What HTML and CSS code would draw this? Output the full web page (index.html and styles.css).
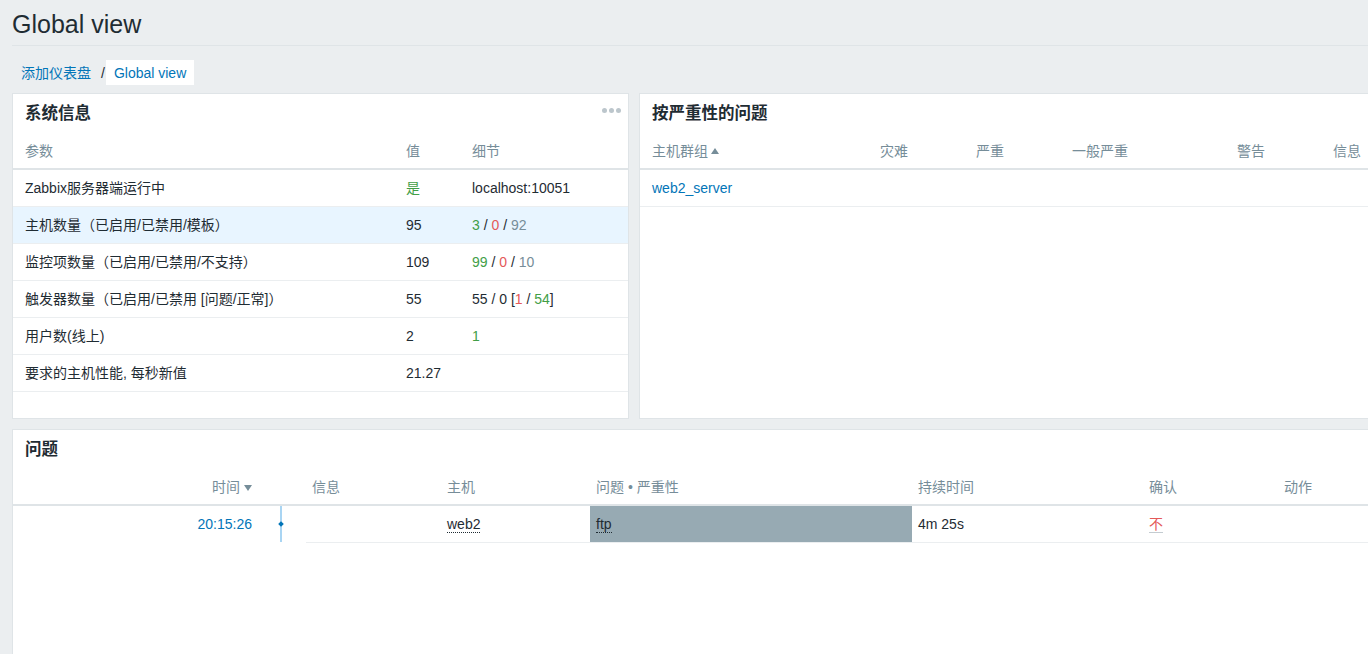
FILE: index.html
```html
<!DOCTYPE html>
<html lang="zh-CN">
<head>
<meta charset="utf-8">
<title>Global view</title>
<link rel="stylesheet" href="styles.css">
</head>
<body>
<header class="page-header">
  <h1 class="page-title">Global view</h1>
</header>
<nav class="breadcrumbs">
  <a class="crumb" href="#">添加仪表盘</a><span class="crumb-sep">/</span><span class="crumb crumb-current">Global view</span>
</nav>
<main class="dashboard">
  <section class="widget">
    <div class="widget-head">
      <h4 class="widget-title">系统信息</h4>
      <span class="widget-menu"><i></i><i></i><i></i></span>
    </div>
    <table class="list-table">
      <colgroup><col class="c-sys-param"><col class="c-sys-value"><col></colgroup>
      <thead>
        <tr><th>参数</th><th>值</th><th>细节</th></tr>
      </thead>
      <tbody>
        <tr><td>Zabbix服务器端运行中</td><td class="green">是</td><td>localhost:10051</td></tr>
        <tr class="row-hover"><td>主机数量（已启用/已禁用/模板）</td><td>95</td><td><span class="green">3</span> / <span class="red">0</span> / <span class="grey">92</span></td></tr>
        <tr><td>监控项数量（已启用/已禁用/不支持）</td><td>109</td><td><span class="green">99</span> / <span class="red">0</span> / <span class="grey">10</span></td></tr>
        <tr><td>触发器数量（已启用/已禁用 [问题/正常]）</td><td>55</td><td>55 / 0 [<span class="red">1</span> / <span class="green">54</span>]</td></tr>
        <tr><td>用户数(线上)</td><td>2</td><td class="green">1</td></tr>
        <tr><td>要求的主机性能, 每秒新值</td><td>21.27</td><td></td></tr>
      </tbody>
    </table>
  </section>

  <section class="widget">
    <div class="widget-head">
      <h4 class="widget-title">按严重性的问题</h4>
    </div>
    <table class="list-table">
      <colgroup><col class="c-sev-group"><col class="c-sev"><col class="c-sev"><col class="c-sev-wide"><col class="c-sev"><col class="c-sev"><col></colgroup>
      <thead>
        <tr><th>主机群组<span class="arrow-up"></span></th><th>灾难</th><th>严重</th><th>一般严重</th><th>警告</th><th>信息</th><th></th></tr>
      </thead>
      <tbody>
        <tr><td><a class="link" href="#">web2_server</a></td><td></td><td></td><td></td><td></td><td></td><td></td></tr>
      </tbody>
    </table>
  </section>

  <section class="widget widget-wide">
    <div class="widget-head">
      <h4 class="widget-title">问题</h4>
    </div>
    <table class="list-table problems">
      <colgroup><col class="c-pr-time"><col class="c-pr-axis"><col class="c-pr-info"><col class="c-pr-host"><col class="c-pr-problem"><col class="c-pr-duration"><col class="c-pr-ack"><col></colgroup>
      <thead>
        <tr><th class="cell-time">时间<span class="arrow-down"></span></th><th></th><th>信息</th><th>主机</th><th>问题 • 严重性</th><th>持续时间</th><th>确认</th><th>动作</th></tr>
      </thead>
      <tbody>
        <tr>
          <td class="cell-time"><a class="link" href="#">20:15:26</a></td>
          <td class="cell-axis"></td>
          <td></td>
          <td><span class="link-action">web2</span></td>
          <td class="sev-na"><span class="link-action">ftp</span></td>
          <td>4m 25s</td>
          <td><span class="link-ack">不</span></td>
          <td></td>
        </tr>
      </tbody>
    </table>
  </section>
</main>
</body>
</html>
```
FILE: styles.css
```css
html, body {
  margin: 0;
  padding: 0;
  overflow: hidden;
  background: #ebeef0;
  color: #1f2c33;
  font-family: "Liberation Sans", Arial, "Noto Sans CJK SC", sans-serif;
  font-size: 14px;
}

.page-header {
  margin-left: 12px;
  padding: 9px 0 6px;
  border-bottom: 1px solid #dfe4e7;
}

.page-title {
  margin: 0;
  font-size: 25px;
  font-weight: normal;
  line-height: 30px;
  color: #1f2c33;
}

.breadcrumbs {
  display: flex;
  align-items: center;
  margin: 14px 0 8px 13px;
  height: 25px;
}

.crumb {
  display: block;
  height: 25px;
  line-height: 26px;
  padding: 0 8px;
  color: #0275b8;
  text-decoration: none;
}

.crumb-current {
  background: #ffffff;
}

.crumb-sep {
  margin: 0 1px 0 2px;
  line-height: 26px;
  color: #1f2c33;
}

.dashboard {
  display: grid;
  grid-template-columns: 617px 800px;
  grid-template-rows: 326px 300px;
  gap: 10px;
  margin-left: 12px;
}

.widget {
  box-sizing: border-box;
  background: #ffffff;
  border: 1px solid #dfe4e7;
  overflow: hidden;
}

.widget-wide {
  grid-column: 1 / span 2;
}

.widget-head {
  display: flex;
  justify-content: space-between;
  height: 39px;
  padding: 0 7px 0 12px;
}

.widget-title {
  margin: 0;
  font-size: 16.5px;
  font-weight: bold;
  line-height: 39px;
  color: #1f2c33;
}

.widget-menu {
  display: flex;
  gap: 2px;
  margin-top: 14px;
  height: 5px;
}

.widget-menu i {
  display: block;
  width: 5px;
  height: 5px;
  border-radius: 50%;
  background: #bcc6cc;
}

.list-table {
  width: 100%;
  border-collapse: separate;
  border-spacing: 0;
  table-layout: fixed;
}

.list-table th {
  padding: 9px 6px 8px;
  line-height: 18px;
  font-weight: normal;
  text-align: left;
  color: #768d99;
  border-bottom: 2px solid #dfe4e7;
  white-space: nowrap;
  overflow: hidden;
}

.list-table td {
  padding: 9px 6px;
  line-height: 18px;
  border-bottom: 1px solid #ebeef0;
  white-space: nowrap;
  overflow: hidden;
}

.list-table th:first-child,
.list-table td:first-child {
  padding-left: 12px;
}

.row-hover td {
  background: #e8f5ff;
}

.c-sys-param { width: 387px; }
.c-sys-value { width: 66px; }

.c-sev-group { width: 234px; }
.c-sev { width: 96px; }
.c-sev-wide { width: 165px; }

.c-pr-time { width: 245px; }
.c-pr-axis { width: 48px; }
.c-pr-info { width: 135px; }
.c-pr-host { width: 149px; }
.c-pr-problem { width: 322px; }
.c-pr-duration { width: 231px; }
.c-pr-ack { width: 135px; }

.green { color: #429e47; }
.red { color: #e45959; }
.grey { color: #768d99; }

.link {
  color: #0275b8;
  text-decoration: none;
}

.arrow-up,
.arrow-down {
  display: inline-block;
  width: 0;
  height: 0;
  border-left: 4px solid transparent;
  border-right: 4px solid transparent;
  vertical-align: middle;
}

.arrow-up {
  margin-left: 3px;
  border-bottom: 6px solid #768d99;
  position: relative;
  top: -1px;
}

.arrow-down {
  margin-left: 4px;
  border-top: 6px solid #768d99;
}

.problems .cell-time {
  text-align: right;
}

.problems td.cell-time,
.problems td.cell-axis {
  border-bottom-color: transparent;
}

.problems td.cell-axis {
  position: relative;
}

.cell-axis::before {
  content: "";
  position: absolute;
  left: 22px;
  top: 0;
  bottom: -1px;
  width: 2px;
  background: #a9d5f3;
}

.cell-axis::after {
  content: "";
  position: absolute;
  left: 21px;
  top: 16px;
  width: 4px;
  height: 4px;
  transform: rotate(45deg);
  background: #0275b8;
}

.problems td.sev-na {
  background: #97aab3;
}

.link-action {
  border-bottom: 1px dotted #1f2c33;
}

.link-ack {
  color: #e45959;
  border-bottom: 1px solid #c4ccd1;
}
```
